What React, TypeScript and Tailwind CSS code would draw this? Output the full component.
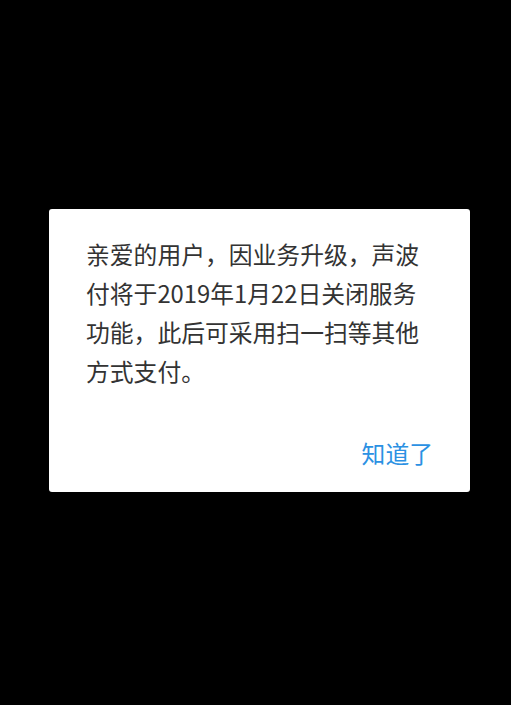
export default function App() {
  return (
    <div className="w-[511px] h-[705px] bg-black flex items-start pl-[49px] pt-[209px]">
      <div
        className="w-[421px] h-[283px] bg-white rounded-[3px] flex flex-col px-[37px] pt-[25px]"
        style={{ fontFamily: '"Noto Sans CJK SC", "Noto Sans", sans-serif' }}
      >
        <p className="text-[23.8px] leading-[39px] text-[#333333]">
          亲爱的用户，因业务升级，声波付将于2019年1月22日关闭服务功能，此后可采用扫一扫等其他方式支付。
        </p>
        <div className="mt-auto mb-[20px] flex justify-end">
          <button className="text-[23.8px] leading-[39px] text-[#2b91e3]">知道了</button>
        </div>
      </div>
    </div>
  );
}
